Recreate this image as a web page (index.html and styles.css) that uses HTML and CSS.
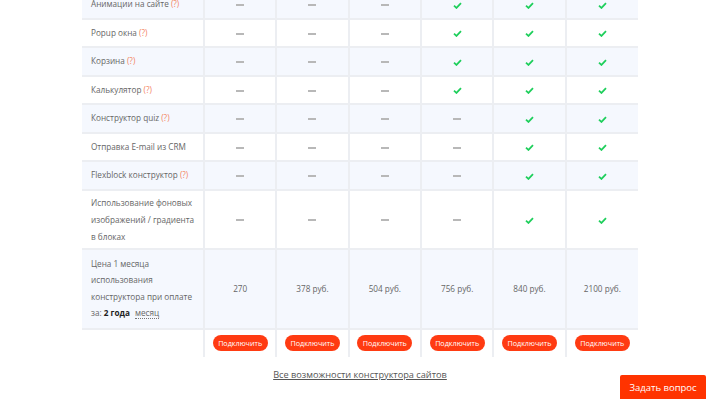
FILE: index.html
```html
<!DOCTYPE html>
<html lang="ru">
<head>
<meta charset="utf-8">
<link rel="stylesheet" href="styles.css">
</head>
<body>
<div class="page">
  <table class="tariffs">
    <colgroup>
      <col class="c-name"><col><col><col><col><col><col>
    </colgroup>
    <tbody>
      <tr class="alt first">
        <td class="name">Анимации на сайте <span class="q">(?)</span></td>
        <td><i class="dash"></i></td><td><i class="dash"></i></td><td><i class="dash"></i></td>
        <td><svg class="chk" viewBox="0 0 10 8"><path d="M1 4.2 L3.8 6.8 L9 1.2"/></svg></td>
        <td><svg class="chk" viewBox="0 0 10 8"><path d="M1 4.2 L3.8 6.8 L9 1.2"/></svg></td>
        <td><svg class="chk" viewBox="0 0 10 8"><path d="M1 4.2 L3.8 6.8 L9 1.2"/></svg></td>
      </tr>
      <tr>
        <td class="name">Popup окна <span class="q">(?)</span></td>
        <td><i class="dash"></i></td><td><i class="dash"></i></td><td><i class="dash"></i></td>
        <td><svg class="chk" viewBox="0 0 10 8"><path d="M1 4.2 L3.8 6.8 L9 1.2"/></svg></td>
        <td><svg class="chk" viewBox="0 0 10 8"><path d="M1 4.2 L3.8 6.8 L9 1.2"/></svg></td>
        <td><svg class="chk" viewBox="0 0 10 8"><path d="M1 4.2 L3.8 6.8 L9 1.2"/></svg></td>
      </tr>
      <tr class="alt">
        <td class="name">Корзина <span class="q">(?)</span></td>
        <td><i class="dash"></i></td><td><i class="dash"></i></td><td><i class="dash"></i></td>
        <td><svg class="chk" viewBox="0 0 10 8"><path d="M1 4.2 L3.8 6.8 L9 1.2"/></svg></td>
        <td><svg class="chk" viewBox="0 0 10 8"><path d="M1 4.2 L3.8 6.8 L9 1.2"/></svg></td>
        <td><svg class="chk" viewBox="0 0 10 8"><path d="M1 4.2 L3.8 6.8 L9 1.2"/></svg></td>
      </tr>
      <tr>
        <td class="name">Калькулятор <span class="q">(?)</span></td>
        <td><i class="dash"></i></td><td><i class="dash"></i></td><td><i class="dash"></i></td>
        <td><svg class="chk" viewBox="0 0 10 8"><path d="M1 4.2 L3.8 6.8 L9 1.2"/></svg></td>
        <td><svg class="chk" viewBox="0 0 10 8"><path d="M1 4.2 L3.8 6.8 L9 1.2"/></svg></td>
        <td><svg class="chk" viewBox="0 0 10 8"><path d="M1 4.2 L3.8 6.8 L9 1.2"/></svg></td>
      </tr>
      <tr class="alt">
        <td class="name">Конструктор quiz <span class="q">(?)</span></td>
        <td><i class="dash"></i></td><td><i class="dash"></i></td><td><i class="dash"></i></td>
        <td><i class="dash"></i></td>
        <td><svg class="chk" viewBox="0 0 10 8"><path d="M1 4.2 L3.8 6.8 L9 1.2"/></svg></td>
        <td><svg class="chk" viewBox="0 0 10 8"><path d="M1 4.2 L3.8 6.8 L9 1.2"/></svg></td>
      </tr>
      <tr>
        <td class="name">Отправка E-mail из CRM</td>
        <td><i class="dash"></i></td><td><i class="dash"></i></td><td><i class="dash"></i></td>
        <td><i class="dash"></i></td>
        <td><svg class="chk" viewBox="0 0 10 8"><path d="M1 4.2 L3.8 6.8 L9 1.2"/></svg></td>
        <td><svg class="chk" viewBox="0 0 10 8"><path d="M1 4.2 L3.8 6.8 L9 1.2"/></svg></td>
      </tr>
      <tr class="alt">
        <td class="name">Flexblock конструктор <span class="q">(?)</span></td>
        <td><i class="dash"></i></td><td><i class="dash"></i></td><td><i class="dash"></i></td>
        <td><i class="dash"></i></td>
        <td><svg class="chk" viewBox="0 0 10 8"><path d="M1 4.2 L3.8 6.8 L9 1.2"/></svg></td>
        <td><svg class="chk" viewBox="0 0 10 8"><path d="M1 4.2 L3.8 6.8 L9 1.2"/></svg></td>
      </tr>
      <tr class="tall">
        <td class="name">Использование фоновых изображений / градиента в блоках</td>
        <td><i class="dash"></i></td><td><i class="dash"></i></td><td><i class="dash"></i></td>
        <td><i class="dash"></i></td>
        <td><svg class="chk" viewBox="0 0 10 8"><path d="M1 4.2 L3.8 6.8 L9 1.2"/></svg></td>
        <td><svg class="chk" viewBox="0 0 10 8"><path d="M1 4.2 L3.8 6.8 L9 1.2"/></svg></td>
      </tr>
      <tr class="alt price">
        <td class="name">Цена 1 месяца использования конструктора при оплате за: <b>2 года</b><span class="period">месяц</span></td>
        <td>270</td>
        <td>378 руб.</td>
        <td>504 руб.</td>
        <td>756 руб.</td>
        <td>840 руб.</td>
        <td>2100 руб.</td>
      </tr>
      <tr class="actions">
        <td class="name"></td>
        <td><a class="btn-connect">Подключить</a></td>
        <td><a class="btn-connect">Подключить</a></td>
        <td><a class="btn-connect">Подключить</a></td>
        <td><a class="btn-connect">Подключить</a></td>
        <td><a class="btn-connect">Подключить</a></td>
        <td><a class="btn-connect">Подключить</a></td>
      </tr>
    </tbody>
  </table>
  <div class="more">
    <a class="more-link">Все возможности конструктора сайтов</a>
  </div>
</div>
<a class="ask">Задать вопрос</a>
</body>
</html>
```

FILE: styles.css
```css
html, body {
  margin: 0;
  padding: 0;
  background: #ffffff;
}
body {
  font-family: "Open Sans", "Noto Sans", sans-serif;
  color: #666666;
  overflow: hidden;
}
.page {
  margin-top: -9px;
}
.tariffs {
  width: 556px;
  margin: 0 auto;
  border-collapse: collapse;
  table-layout: fixed;
  font-size: 8.2px;
}
.c-name {
  width: 122px;
}
.tariffs td {
  border: 2px solid #eceef2;
  text-align: center;
  vertical-align: middle;
  height: 26.5px;
  padding: 0;
  line-height: 12px;
}
.tariffs tr td:first-child {
  border-left: none;
}
.tariffs tr td:last-child {
  border-right: none;
}
.tariffs tr.first td {
  border-top: none;
}
.tariffs tr.alt td {
  background: #f5f8fe;
}
.tariffs td.name {
  text-align: left;
  padding: 0 4px 0 9px;
}
.q {
  color: #f4845f;
}
.dash {
  display: inline-block;
  width: 8px;
  height: 2px;
  background: #b8b8b8;
  vertical-align: middle;
}
.chk {
  width: 9px;
  height: 7px;
  vertical-align: middle;
  fill: none;
  stroke: #1fcf5c;
  stroke-width: 2;
}
.tall td {
  height: 57.5px;
}
.tall td.name {
  line-height: 17px;
}
.price td {
  height: 77.5px;
}
.price td.name {
  line-height: 16.5px;
}
.price b {
  color: #222;
  font-weight: 700;
}
.period {
  border-bottom: 1px dotted #777;
  margin-left: 5px;
}
.tariffs tr.actions td {
  border-bottom: none;
  height: 27px;
  background: #fff;
}
.btn-connect {
  display: inline-block;
  background: #ff3b12;
  color: #fff;
  font-size: 7.2px;
  line-height: 16px;
  height: 16px;
  padding: 0 5.5px;
  border-radius: 8px;
  white-space: nowrap;
}
.more {
  text-align: center;
  padding-top: 4px;
}
.more-link {
  color: #555;
  font-size: 9.2px;
  text-decoration: underline;
}
.ask {
  position: fixed;
  right: 14px;
  bottom: -6px;
  width: 86px;
  height: 30px;
  line-height: 26px;
  text-align: center;
  background: #ff3300;
  color: #fff;
  font-size: 9.5px;
  border-radius: 2px;
}
```
